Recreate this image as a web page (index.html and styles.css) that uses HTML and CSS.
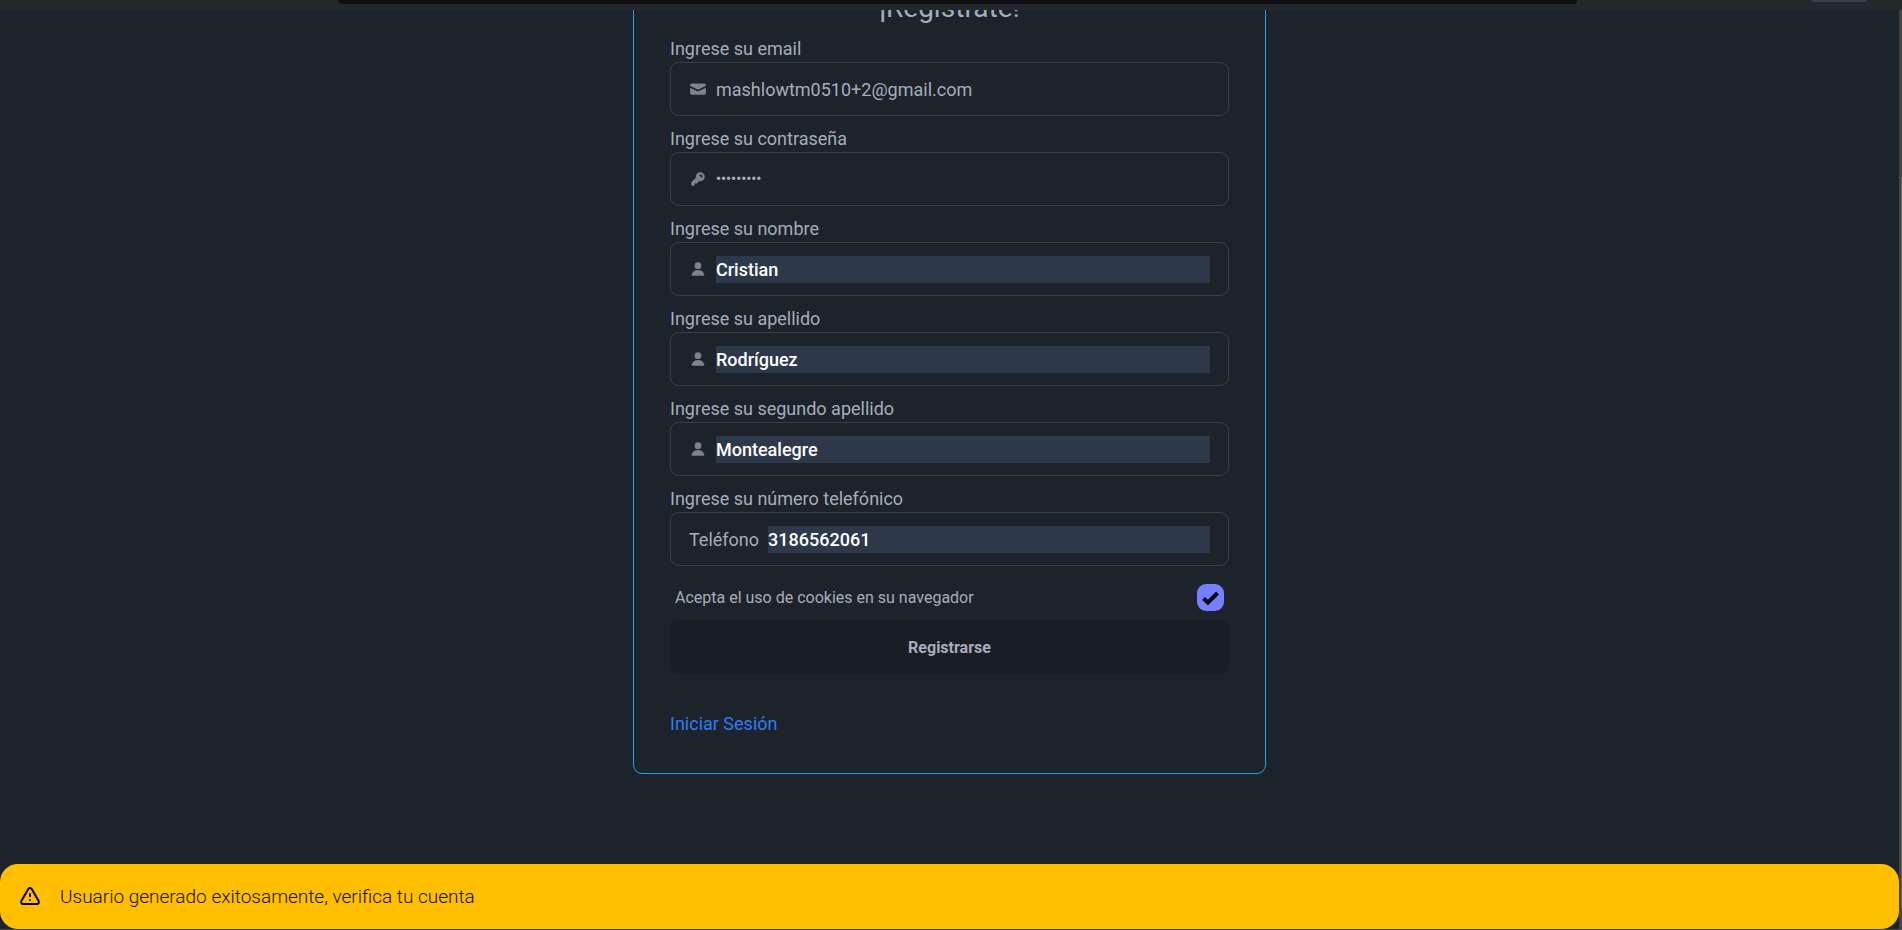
FILE: index.html
```html
<!DOCTYPE html>
<html lang="es">
<head>
<meta charset="utf-8">
<meta name="viewport" content="width=device-width, initial-scale=1">
<title>Registro</title>
<link rel="stylesheet" href="styles.css">
</head>
<body>
<div class="chrome">
  <div class="chrome-address"></div>
  <div class="chrome-pill"></div>
</div>
<div class="viewport">
  <div class="page">
    <main class="stage">
      <form class="card">
        <h1 class="title">¡Regístrate!</h1>

        <label class="label" for="email">Ingrese su email</label>
        <div class="field">
          <svg class="icon" viewBox="0 0 16 16" aria-hidden="true"><path d="M2.5 3A1.5 1.5 0 0 0 1 4.500v.793c.026.009.051.02.076.032L7.674 8.510c.206.100.446.100.652 0l6.598-3.185A.755.755 0 0 1 15 5.293V4.500A1.500 1.500 0 0 0 13.500 3h-11Z"/><path d="M15 6.954 8.978 9.860a2.250 2.250 0 0 1-1.956 0L1 6.954V11.500A1.500 1.500 0 0 0 2.500 13h11a1.500 1.500 0 0 0 1.500-1.500V6.954Z"/></svg>
          <input class="input" id="email" type="email" value="mashlowtm0510+2@gmail.com">
        </div>

        <label class="label" for="password">Ingrese su contraseña</label>
        <div class="field">
          <svg class="icon" viewBox="0 0 16 16" aria-hidden="true"><path fill-rule="evenodd" clip-rule="evenodd" d="M14 6a4 4 0 0 1-4.899 3.899l-1.955 1.955a.5.5 0 0 1-.353.146H5v1.500a.5.5 0 0 1-.5.5h-2a.5.5 0 0 1-.5-.5v-2.293a.5.5 0 0 1 .146-.353l3.955-3.955A4 4 0 1 1 14 6Zm-4-2a.75.75 0 0 0 0 1.500.5.5 0 0 1 .5.5.75.75 0 0 0 1.500 0 2 2 0 0 0-2-2Z"/></svg>
          <input class="input input-password" id="password" type="password" value="123456789">
        </div>

        <label class="label" for="name">Ingrese su nombre</label>
        <div class="field">
          <svg class="icon" viewBox="0 0 16 16" aria-hidden="true"><path d="M8 8a3 3 0 1 0 0-6 3 3 0 0 0 0 6ZM12.735 14c.618 0 1.093-.561.872-1.139a6.002 6.002 0 0 0-11.215 0c-.22.578.254 1.139.872 1.139h9.470Z"/></svg>
          <input class="input input-filled" id="name" type="text" value="Cristian">
        </div>

        <label class="label" for="surname">Ingrese su apellido</label>
        <div class="field">
          <svg class="icon" viewBox="0 0 16 16" aria-hidden="true"><path d="M8 8a3 3 0 1 0 0-6 3 3 0 0 0 0 6ZM12.735 14c.618 0 1.093-.561.872-1.139a6.002 6.002 0 0 0-11.215 0c-.22.578.254 1.139.872 1.139h9.470Z"/></svg>
          <input class="input input-filled" id="surname" type="text" value="Rodríguez">
        </div>

        <label class="label" for="surname2">Ingrese su segundo apellido</label>
        <div class="field">
          <svg class="icon" viewBox="0 0 16 16" aria-hidden="true"><path d="M8 8a3 3 0 1 0 0-6 3 3 0 0 0 0 6ZM12.735 14c.618 0 1.093-.561.872-1.139a6.002 6.002 0 0 0-11.215 0c-.22.578.254 1.139.872 1.139h9.470Z"/></svg>
          <input class="input input-filled" id="surname2" type="text" value="Montealegre">
        </div>

        <label class="label" for="phone">Ingrese su número telefónico</label>
        <div class="field">
          <span class="prefix">Teléfono</span>
          <input class="input input-filled" id="phone" type="tel" value="3186562061">
        </div>

        <div class="consent">
          <label for="cookies">Acepta el uso de cookies en su navegador</label>
          <span class="check">
            <input class="check-input" id="cookies" type="checkbox" checked>
            <svg class="check-mark" viewBox="0 0 27 27" aria-hidden="true"><path d="M6.500 14.500 11 18.500 20.500 9"/></svg>
          </span>
        </div>

        <button class="submit" type="button">Registrarse</button>
        <a class="login" href="#">Iniciar Sesión</a>
      </form>
    </main>
    <div class="toast" role="alert">
      <svg class="toast-icon" viewBox="0 0 24 24" aria-hidden="true"><path d="M12 9v2m0 4h.01m-6.938 4h13.856c1.540 0 2.502-1.667 1.732-3L13.732 4c-.77-1.333-2.694-1.333-3.464 0L3.340 16c-.77 1.333.192 3 1.732 3z"/></svg>
      <span>Usuario generado exitosamente, verifica tu cuenta</span>
    </div>
  </div>
  <div class="scrollbar"><div class="scrollbar-thumb"></div></div>
</div>
</body>
</html>
```

FILE: styles.css
```css
* {
  box-sizing: border-box;
}

body {
  margin: 0;
  height: 100vh;
  display: flex;
  flex-direction: column;
  overflow: hidden;
  background: #1d232a;
  color: #a6adbb;
  font: 18px/27px Roboto, "Liberation Sans", sans-serif;
}

.chrome {
  flex: none;
  display: grid;
  grid-template-columns: 338fr 1239fr 234fr 56fr 35fr;
  align-items: start;
  height: 10px;
  background: #23282b;
}

.chrome-address {
  grid-column: 2;
  height: 4px;
  border-radius: 0 0 6px 6px;
  background: #0f0f15;
}

.chrome-pill {
  grid-column: 4;
  height: 2px;
  border-radius: 0 0 4px 4px;
  background: #3a3e48;
}

.viewport {
  flex: 1;
  min-height: 0;
  display: flex;
  border-bottom: 1px solid #47474a;
}

.page {
  flex: 1;
  display: flex;
  flex-direction: column;
}

.stage {
  flex: 1;
  min-height: 0;
  display: flex;
  flex-direction: column;
  justify-content: flex-end;
  align-items: center;
  padding-bottom: 90px;
  overflow: hidden;
}

.card {
  width: 33.3333%;
  display: flex;
  flex-direction: column;
  padding: 36px;
  border: 1px solid #1ca3e2;
  border-radius: 9px;
}

.title {
  margin: 0 0 9px;
  font-size: 28px;
  line-height: 36px;
  font-weight: 400;
  text-align: center;
}

.label {
  align-self: flex-start;
}

.field {
  display: flex;
  align-items: center;
  gap: 9px;
  height: 54px;
  margin-bottom: 9px;
  padding: 0 18px;
  border: 1px solid #393f47;
  border-radius: 9px;
}

.icon {
  flex: none;
  width: 18px;
  height: 18px;
  fill: #7c828e;
}

.input {
  flex: 1;
  min-width: 0;
  height: 27px;
  padding: 0;
  border: 0;
  outline: 0;
  background: transparent;
  color: inherit;
  font: inherit;
}

.input-password {
  font-size: 14px;
  font-weight: 700;
}

.input-filled {
  background: #2e384b;
  color: #fff;
  font-weight: 500;
}

.consent {
  display: flex;
  align-items: center;
  justify-content: space-between;
  padding: 9px 5px;
  font-size: 16px;
}

.check {
  display: grid;
}

.check-input,
.check-mark {
  grid-area: 1 / 1;
  width: 27px;
  height: 27px;
  margin: 0;
}

.check-input {
  appearance: none;
  border-radius: 9px;
  background: #7480ff;
}

.check-mark {
  fill: none;
  stroke: #050617;
  stroke-width: 4;
  pointer-events: none;
}

.submit {
  height: 54px;
  padding: 0 18px;
  border: 0;
  border-radius: 9px;
  background: #191e24;
  color: inherit;
  font: inherit;
  font-size: 16px;
  font-weight: 700;
}

.login {
  align-self: flex-start;
  margin-top: 36px;
  color: #2f7bf6;
  text-decoration: none;
}

.toast {
  display: flex;
  align-items: center;
  gap: 18px;
  height: 65px;
  padding: 0 18px;
  border-radius: 18px;
  background: #ffbe00;
  color: #140f00;
  font-size: 19px;
  font-weight: 300;
}

.toast-icon {
  width: 24px;
  height: 24px;
  fill: none;
  stroke: #000;
  stroke-width: 2;
  stroke-linecap: round;
  stroke-linejoin: round;
}

.scrollbar {
  width: 3px;
  padding: 167px 0 21px 2px;
  background: #424242;
}

.scrollbar-thumb {
  height: 100%;
  background: #686868;
}
```
